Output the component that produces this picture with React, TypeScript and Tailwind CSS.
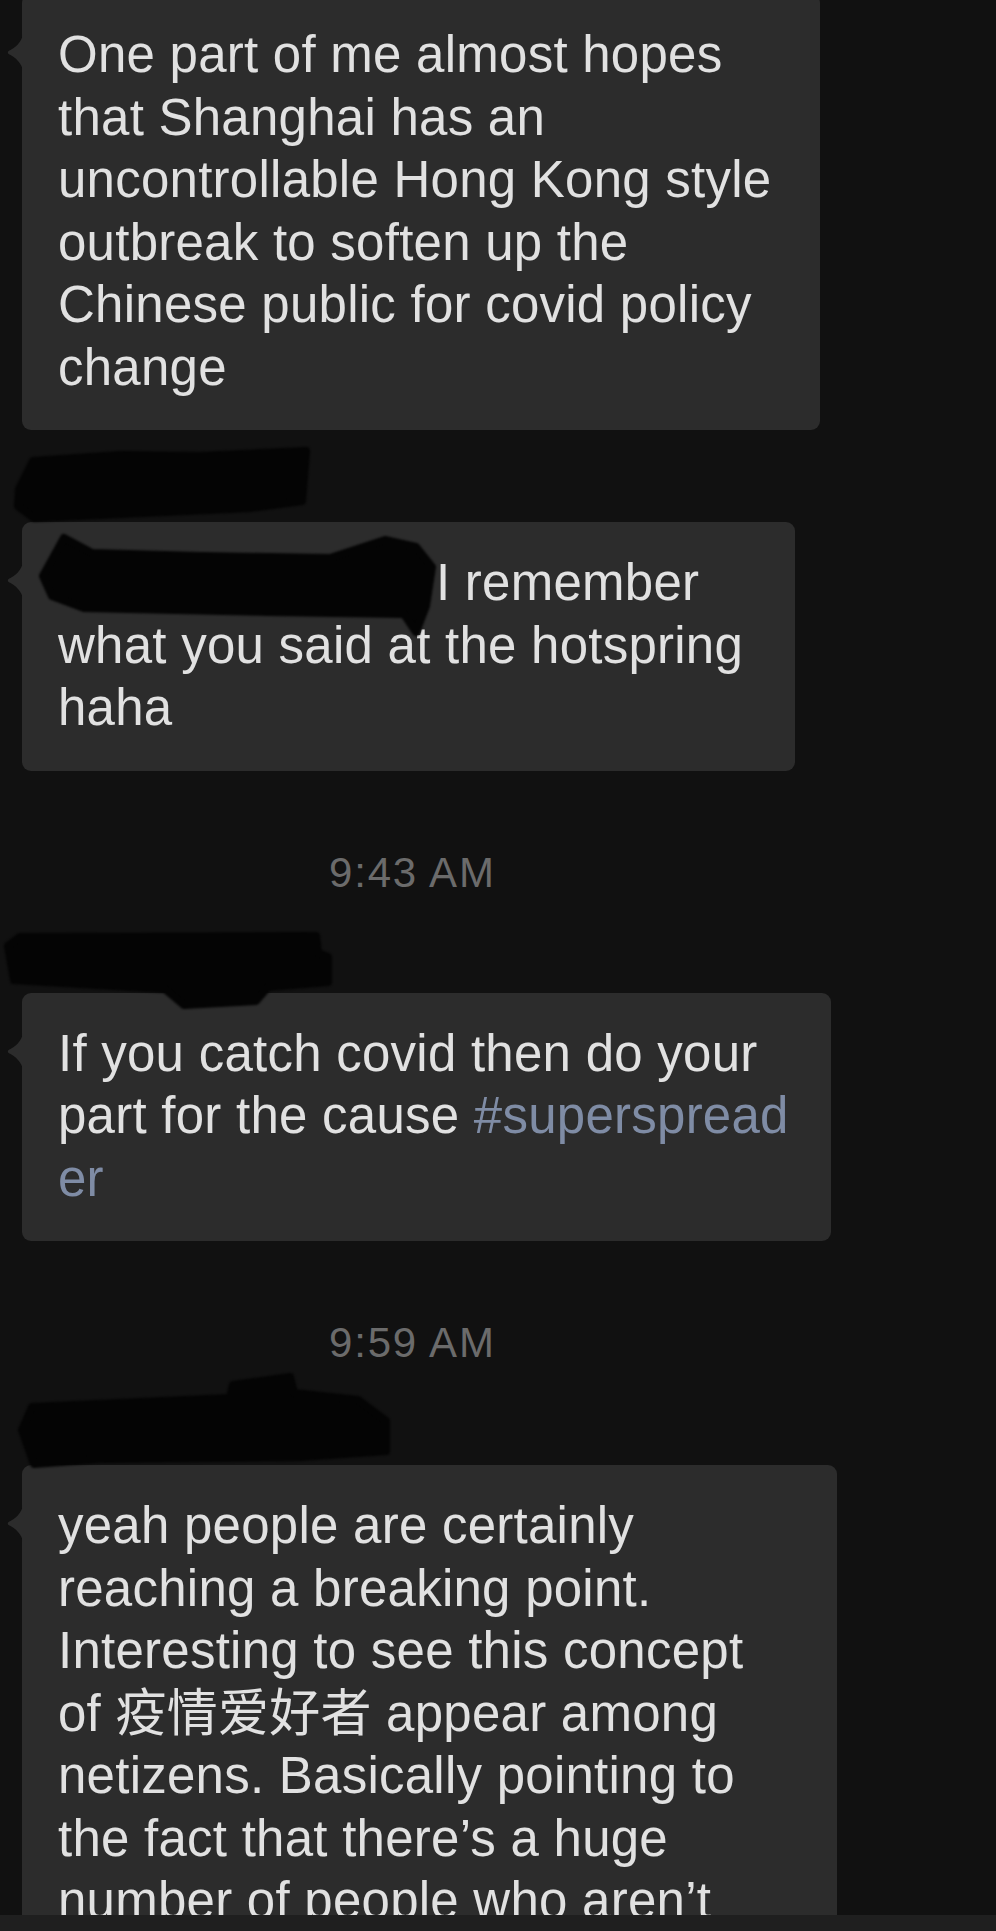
const font = "font-['Liberation_Sans','Noto_Sans_CJK_SC',sans-serif]";

const Tail = () => (
  <svg
    className="absolute left-[-15px] top-[40px]"
    width="16"
    height="37"
    viewBox="0 0 16 37"
  >
    <path
      d="M16 0 C15 8 8 14 1.5 17 Q0 18.5 1.5 20 C8 23 15 29 16 37 Z"
      fill="#2c2c2c"
    />
  </svg>
);

const Bubble = ({ width, children }: { width: string; children: React.ReactNode }) => (
  <div
    className={`relative ml-[22px] rounded-[9px] bg-[#2c2c2c] pl-[36px] pt-[30px] pb-[31px] text-[51px] leading-[62.5px] tracking-[0.25px] text-[#e1e1e1] ${width}`}
  >
    <Tail />
    {children}
  </div>
);

const Line = ({ children }: { children: React.ReactNode }) => (
  <div className="whitespace-nowrap">{children}</div>
);

const Time = ({ label }: { label: string }) => (
  <div className="ml-[329px] text-[42px] leading-[50px] tracking-[1.8px] text-[#6b6b6b]">
    {label}
  </div>
);

// black marker scribbles over names
const Redactions = () => (
  <svg
    className="pointer-events-none absolute left-0 top-0 blur-[1px]"
    width="996"
    height="1931"
    viewBox="0 0 996 1931"
  >
    <g fill="#040404" stroke="#040404" strokeWidth="8" strokeLinejoin="round">
      <polygon points="33,461 120,455 200,456 306,451 302,501 250,508 34,518 18,506 19,489" />
      <polygon points="43,576 64,538 92,553 200,556 330,558 385,540 416,547 432,567 426,606 416,632 404,614 270,612 84,608 52,596" />
      <polygon points="8,946 20,937 316,936 318,953 328,957 328,982 268,987 256,1001 184,1005 165,989 14,980" />
      <polygon points="22,1430 32,1407 230,1398 233,1385 290,1377 294,1393 358,1400 386,1421 386,1451 300,1457 100,1459 34,1464" />
    </g>
  </svg>
);

export default function App() {
  return (
    <div className={`relative h-[1931px] w-[996px] overflow-hidden bg-[#111111] ${font}`}>
      <div className="flex flex-col">
        <div className="-mt-[6px]">
          <Bubble width="w-[798px]">
            <Line>One part of me almost hopes</Line>
            <Line>that Shanghai has an</Line>
            <Line>uncontrollable Hong Kong style</Line>
            <Line>outbreak to soften up the</Line>
            <Line>Chinese public for covid policy</Line>
            <Line>change</Line>
          </Bubble>
        </div>

        <div className="mt-[92px]">
          <Bubble width="w-[773px]">
            <Line>
              <span className="inline-block w-[378px]" />I remember
            </Line>
            <Line>what you said at the hotspring</Line>
            <Line>haha</Line>
          </Bubble>
        </div>

        <div className="mt-[77px]">
          <Time label="9:43 AM" />
        </div>

        <div className="mt-[95px]">
          <Bubble width="w-[809px]">
            <Line>If you catch covid then do your</Line>
            <Line>
              part for the cause <span className="text-[#7f8ca5]">#superspread</span>
            </Line>
            <Line>
              <span className="text-[#7f8ca5]">er</span>
            </Line>
          </Bubble>
        </div>

        <div className="mt-[77px]">
          <Time label="9:59 AM" />
        </div>

        <div className="mt-[97px]">
          <Bubble width="w-[815px]">
            <Line>yeah people are certainly</Line>
            <Line>reaching a breaking point.</Line>
            <Line>Interesting to see this concept</Line>
            <Line>of 疫情爱好者 appear among</Line>
            <Line>netizens. Basically pointing to</Line>
            <Line>the fact that there’s a huge</Line>
            <Line>number of people who aren’t</Line>
          </Bubble>
        </div>
      </div>

      <Redactions />

      <div className="absolute inset-x-0 bottom-0 h-[16px] bg-[#1f1f1f]" />
    </div>
  );
}
